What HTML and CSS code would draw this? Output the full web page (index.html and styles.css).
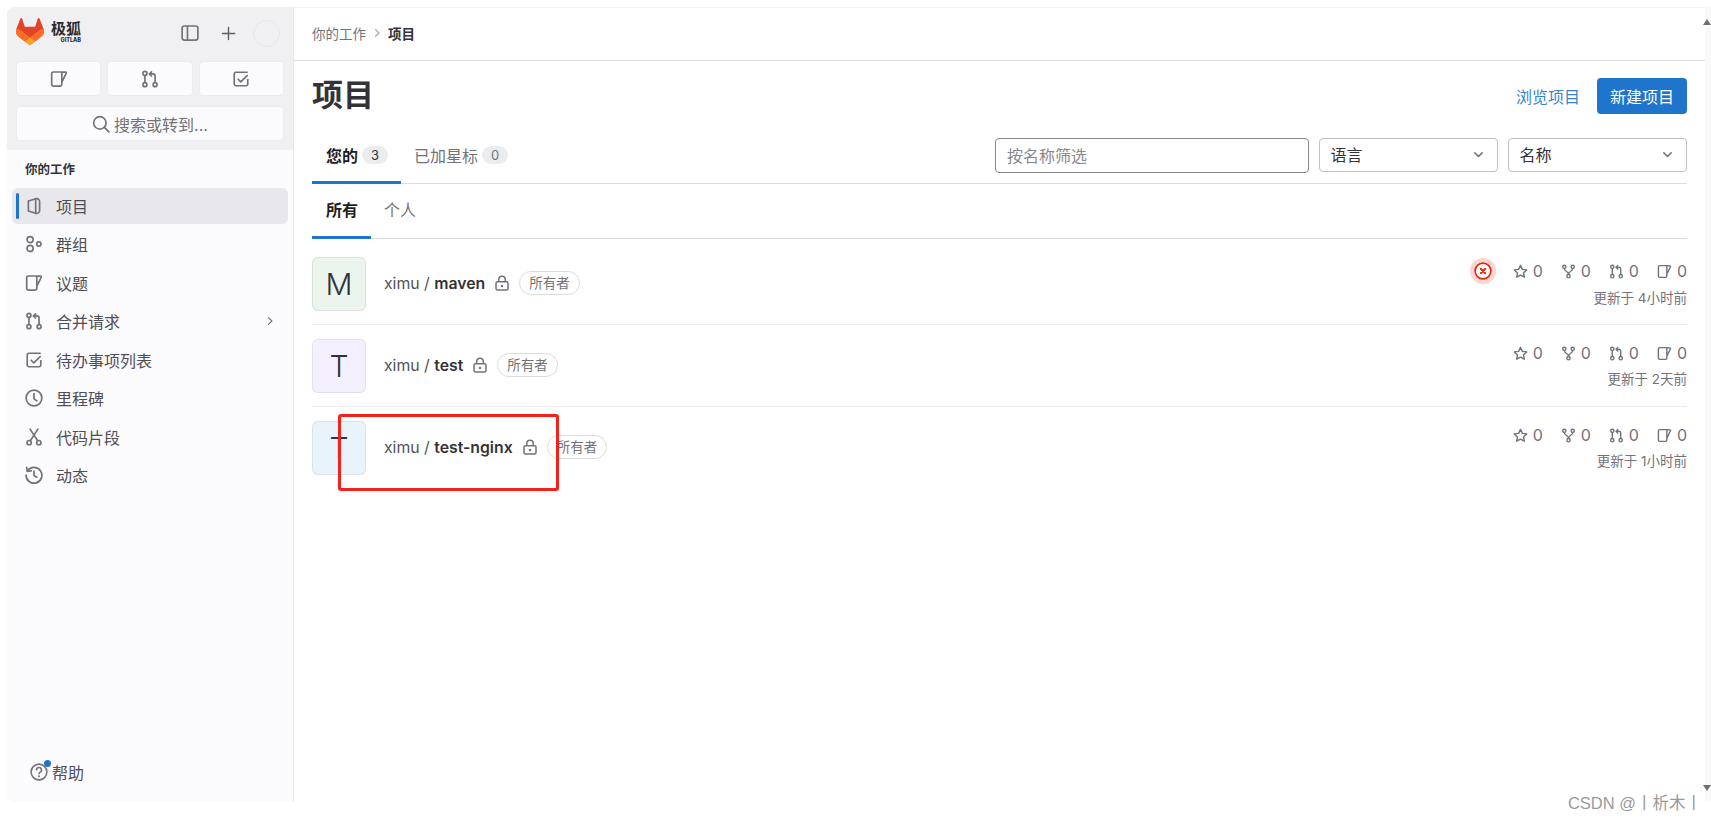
FILE: index.html
```html
<!DOCTYPE html>
<html lang="zh">
<head>
  <meta charset="UTF-8">
  <title>项目</title>
  <link rel="stylesheet" href="styles.css">
</head>
<body>
  <svg class="sprite" width="0" height="0">
    <symbol id="i-issue" viewBox="0 0 16 16"><path d="M3 1.750h7.500l3.500.200c.4 0 .6.400.450.750L10.500 11v1.750a1.500 1.500 0 0 1-1.500 1.500H3a1.500 1.500 0 0 1-1.500-1.500v-9.500A1.500 1.500 0 0 1 3 1.750zM10.500 1.750V11" fill="none" stroke="currentColor" stroke-width="1.500" stroke-linejoin="round"/></symbol>
    <symbol id="i-mr" viewBox="0 0 16 16"><g fill="none" stroke="currentColor" stroke-width="1.500"><circle cx="3.500" cy="3" r="1.750"/><circle cx="3.500" cy="13" r="1.750"/><circle cx="12.500" cy="13" r="1.750"/><path d="M3.500 4.750v6.500M12.500 11.250V5.500a2 2 0 0 0-2-2H8"/><path d="M9.800 1.200 7.500 3.500l2.300 2.300"/></g></symbol>
    <symbol id="i-todo" viewBox="0 0 16 16"><g fill="none" stroke="currentColor" stroke-width="1.500" stroke-linejoin="round"><path d="M14 8v4.500a1.500 1.500 0 0 1-1.500 1.500h-9A1.500 1.500 0 0 1 2 12.500v-9A1.500 1.500 0 0 1 3.500 2H14"/><path d="m5.500 8.200 2.300 2.300 5.700-5.500" stroke-linecap="round"/></g></symbol>
    <symbol id="i-project" viewBox="0 0 16 16"><g fill="none" stroke="currentColor" stroke-width="1.500" stroke-linejoin="round"><path d="M3 3.500 9.500 1.500h1a2.500 2.500 0 0 1 2.500 2.500v8a2.500 2.500 0 0 1-2.500 2.500h-1L3 12.500z"/><path d="M9.500 1.500v13"/></g></symbol>
    <symbol id="i-group" viewBox="0 0 16 16"><g fill="none" stroke="currentColor" stroke-width="1.500"><circle cx="4.500" cy="4.100" r="2.700"/><circle cx="4.500" cy="11.900" r="2.700"/><circle cx="12.300" cy="8" r="1.900"/></g></symbol>
    <symbol id="i-clock" viewBox="0 0 16 16"><g fill="none" stroke="currentColor" stroke-width="1.500" stroke-linecap="round"><circle cx="8" cy="8" r="7"/><path d="M8 4v4.500l2.500 2"/></g></symbol>
    <symbol id="i-snippet" viewBox="0 0 16 16"><g fill="none" stroke="currentColor" stroke-width="1.500" stroke-linecap="round"><circle cx="3.700" cy="13" r="1.900"/><circle cx="12.300" cy="13" r="1.900"/><path d="M11.300 11.400 4.500 1M4.700 11.400 11.500 1"/></g></symbol>
    <symbol id="i-history" viewBox="0 0 16 16"><g fill="none" stroke="currentColor" stroke-width="1.500" stroke-linecap="round" stroke-linejoin="round"><path d="M2.300 4.200A7 7 0 1 1 1 8"/><path d="M1.500 1.200 2 4.700l3.500-.4M8 4.500v4l2.500 1.500"/></g></symbol>
    <symbol id="i-star" viewBox="0 0 16 16"><path d="m8 1.500 2 4.200 4.600.6-3.400 3.200.9 4.600L8 11.900l-4.100 2.200.9-4.600L1.400 6.300 6 5.700z" fill="none" stroke="currentColor" stroke-width="1.500" stroke-linejoin="round"/></symbol>
    <symbol id="i-fork" viewBox="0 0 16 16"><g fill="none" stroke="currentColor" stroke-width="1.500"><circle cx="3.500" cy="3" r="1.750"/><circle cx="12.500" cy="3" r="1.750"/><circle cx="8" cy="13" r="1.750"/><path d="M3.500 4.750c0 3.500 4.500 2.500 4.500 6.500M12.500 4.750c0 3.500-4.500 2.500-4.500 6.500"/></g></symbol>
    <symbol id="i-lock" viewBox="0 0 16 16"><g fill="none" stroke="currentColor" stroke-width="1.500"><rect x="2" y="6.250" width="12" height="8.250" rx="1.500"/><path d="M4.750 6.250V4a3.250 3.250 0 0 1 6.500 0v2.250"/></g><circle cx="8" cy="10.400" r="1.250" fill="currentColor"/></symbol>
    <symbol id="i-chevron" viewBox="0 0 16 16"><path d="m6 3.500 4.500 4.500L6 12.500" fill="none" stroke="currentColor" stroke-width="1.500" stroke-linecap="round" stroke-linejoin="round"/></symbol>
    <symbol id="i-down" viewBox="0 0 16 16"><path d="M3.500 6 8 10.500 12.500 6" fill="none" stroke="currentColor" stroke-width="1.800" stroke-linecap="round" stroke-linejoin="round"/></symbol>
  </svg>

  <div class="shell">
    <aside class="sidebar">
      <div class="side-top">
        <div class="brand-row">
          <svg class="tanuki" viewBox="0 0 25 24">
            <path d="m24.507 9.500-.034-.090L21.082.562a.896.896 0 0 0-1.694.091l-2.290 7.010H7.825L5.535.653a.898.898 0 0 0-1.694-.090L.451 9.411.416 9.500a6.297 6.297 0 0 0 2.090 7.278l.012.010.030.022 5.160 3.867 2.560 1.935 1.554 1.176a1.051 1.051 0 0 0 1.268 0l1.555-1.176 2.560-1.935 5.197-3.890.014-.010A6.297 6.297 0 0 0 24.507 9.500Z" fill="#e24329"/>
            <path d="m24.507 9.500-.034-.090a11.440 11.440 0 0 0-4.560 2.051l-7.447 5.632 4.742 3.584 5.197-3.890.014-.010A6.297 6.297 0 0 0 24.507 9.500Z" fill="#fc6d26"/>
            <path d="m7.707 20.677 2.560 1.935 1.555 1.176a1.051 1.051 0 0 0 1.268 0l1.555-1.176 2.560-1.935-4.743-3.584-4.755 3.584Z" fill="#fca326"/>
            <path d="M5.010 11.461a11.430 11.430 0 0 0-4.560-2.050L.416 9.500a6.297 6.297 0 0 0 2.090 7.278l.012.010.030.022 5.160 3.867 4.745-3.584-7.444-5.632Z" fill="#fc6d26"/>
          </svg>
          <div class="brand-text">
            <span class="brand-name">极狐</span>
            <span class="brand-sub">GITLAB</span>
          </div>
          <svg class="top-icon panel-icon" viewBox="0 0 16 16"><g fill="none" stroke="currentColor" stroke-width="1.500"><rect x="1" y="1.750" width="14" height="12.500" rx="2"/><path d="M5.750 1.750v12.500"/></g></svg>
          <svg class="top-icon plus-icon" viewBox="0 0 16 16"><path d="M8 1.500v13M1.500 8h13" stroke="currentColor" stroke-width="1.500" stroke-linecap="round"/></svg>
          <span class="avatar-blank"></span>
        </div>
        <div class="quick-row">
          <button class="quick-btn"><svg class="icon"><use href="#i-issue"/></svg></button>
          <button class="quick-btn"><svg class="icon"><use href="#i-mr"/></svg></button>
          <button class="quick-btn"><svg class="icon"><use href="#i-todo"/></svg></button>
        </div>
        <button class="search-btn">
          <svg class="icon" viewBox="0 0 16 16"><g fill="none" stroke="currentColor" stroke-width="1.500" stroke-linecap="round"><circle cx="7" cy="7" r="5.500"/><path d="m11 11 4 4"/></g></svg>
          搜索或转到...
        </button>
      </div>

      <div class="nav-label">你的工作</div>
      <nav class="nav">
        <a class="nav-item active"><svg class="icon"><use href="#i-project"/></svg>项目</a>
        <a class="nav-item"><svg class="icon"><use href="#i-group"/></svg>群组</a>
        <a class="nav-item"><svg class="icon"><use href="#i-issue"/></svg>议题</a>
        <a class="nav-item"><svg class="icon"><use href="#i-mr"/></svg>合并请求<svg class="nav-chevron"><use href="#i-chevron"/></svg></a>
        <a class="nav-item"><svg class="icon"><use href="#i-todo"/></svg>待办事项列表</a>
        <a class="nav-item"><svg class="icon"><use href="#i-clock"/></svg>里程碑</a>
        <a class="nav-item"><svg class="icon"><use href="#i-snippet"/></svg>代码片段</a>
        <a class="nav-item"><svg class="icon"><use href="#i-history"/></svg>动态</a>
      </nav>

      <div class="help">
        <span class="help-icon">
          <svg class="icon" viewBox="0 0 16 16"><g fill="none" stroke="currentColor" stroke-width="1.400" stroke-linecap="round"><circle cx="8" cy="8" r="7"/><path d="M5.800 6.200a2.200 2.200 0 1 1 3.300 1.900c-.7.400-1.100.8-1.100 1.500"/></g><circle cx="8" cy="11.800" r=".9" fill="currentColor"/></svg>
          <span class="help-dot"></span>
        </span>
        帮助
      </div>
    </aside>

    <main class="main">
      <div class="breadcrumb">
        <span>你的工作</span>
        <svg class="crumb-sep"><use href="#i-chevron"/></svg>
        <b>项目</b>
      </div>

      <div class="content">
        <div class="title-row">
          <h1>项目</h1>
          <a class="link">浏览项目</a>
          <button class="btn-primary">新建项目</button>
        </div>

        <div class="tabs-row">
          <div class="tab active">您的<span class="count">3</span></div>
          <div class="tab">已加星标<span class="count muted">0</span></div>
          <div class="filters">
            <div class="filter-input">按名称筛选</div>
            <div class="select">语言<svg class="select-arrow"><use href="#i-down"/></svg></div>
            <div class="select">名称<svg class="select-arrow"><use href="#i-down"/></svg></div>
          </div>
        </div>

        <div class="subtabs-row">
          <div class="subtab active">所有</div>
          <div class="subtab">个人</div>
        </div>

        <div class="project-row first">
          <div class="proj-avatar green">M</div>
          <div class="proj-name">ximu / <b>maven</b><svg class="lock"><use href="#i-lock"/></svg><span class="role">所有者</span></div>
          <div class="proj-meta">
            <div class="stats">
              <span class="status-failed"><svg viewBox="0 0 16 16"><circle cx="8" cy="8" r="7" fill="#fff" stroke="#dd2b0e" stroke-width="1.500"/><path d="m6 6 4 4m0-4-4 4" stroke="#dd2b0e" stroke-width="1.800" stroke-linecap="round"/></svg></span>
              <span class="stat"><svg class="stat-icon"><use href="#i-star"/></svg>0</span>
              <span class="stat"><svg class="stat-icon"><use href="#i-fork"/></svg>0</span>
              <span class="stat"><svg class="stat-icon"><use href="#i-mr"/></svg>0</span>
              <span class="stat"><svg class="stat-icon"><use href="#i-issue"/></svg>0</span>
            </div>
            <div class="updated">更新于 4小时前</div>
          </div>
        </div>

        <div class="project-row">
          <div class="proj-avatar violet">T</div>
          <div class="proj-name">ximu / <b>test</b><svg class="lock"><use href="#i-lock"/></svg><span class="role">所有者</span></div>
          <div class="proj-meta">
            <div class="stats">
              <span class="stat"><svg class="stat-icon"><use href="#i-star"/></svg>0</span>
              <span class="stat"><svg class="stat-icon"><use href="#i-fork"/></svg>0</span>
              <span class="stat"><svg class="stat-icon"><use href="#i-mr"/></svg>0</span>
              <span class="stat"><svg class="stat-icon"><use href="#i-issue"/></svg>0</span>
            </div>
            <div class="updated">更新于 2天前</div>
          </div>
        </div>

        <div class="project-row last">
          <div class="proj-avatar blue">T</div>
          <div class="proj-name">ximu / <b>test-nginx</b><svg class="lock"><use href="#i-lock"/></svg><span class="role">所有者</span></div>
          <div class="proj-meta">
            <div class="stats">
              <span class="stat"><svg class="stat-icon"><use href="#i-star"/></svg>0</span>
              <span class="stat"><svg class="stat-icon"><use href="#i-fork"/></svg>0</span>
              <span class="stat"><svg class="stat-icon"><use href="#i-mr"/></svg>0</span>
              <span class="stat"><svg class="stat-icon"><use href="#i-issue"/></svg>0</span>
            </div>
            <div class="updated">更新于 1小时前</div>
          </div>
        </div>
      </div>
    </main>

    <div class="scroll-strip"></div>
  </div>

  <!-- annotation drawn on top of the screenshot -->
  <div class="red-box"></div>
  <span class="scroll-arrow up"></span>
  <span class="scroll-arrow down"></span>
  <div class="watermark">CSDN @丨析木丨</div>
</body>
</html>
```

FILE: styles.css
```css
:root {
  --text: #333238;
  --muted: #737278;
  --icon: #737278;
  --line: #dcdcde;
  --line-soft: #ececef;
  --blue: #1f75cb;
  --side: #fbfafd;
  --side-top: #f0f0f3;
}

* {
  box-sizing: border-box;
}

html, body {
  margin: 0;
  height: 822px;
  overflow: hidden;
}

body {
  position: relative;
  background: #fff;
  color: var(--text);
  font-family: Inter, "Noto Sans CJK SC", sans-serif;
  font-size: 16px;
}

.sprite {
  position: absolute;
}

.shell {
  display: flex;
  height: 802px;
  padding: 7px 0 0 7px;
}

.icon {
  width: 18px;
  height: 18px;
  color: var(--icon);
  flex: none;
}

/* sidebar */
.sidebar {
  width: 287px;
  flex: none;
  display: flex;
  flex-direction: column;
  background: var(--side);
  border-right: 1px solid #e8e8ea;
  border-radius: 8px 0 0 8px;
  overflow: hidden;
}

.side-top {
  height: 143px;
  padding: 10px 9px 0;
  background: var(--side-top);
}

.brand-row {
  display: flex;
  align-items: center;
  height: 28px;
  margin-bottom: 16px;
  padding-top: 4px;
}

.tanuki {
  width: 28px;
  height: 27px;
  flex: none;
  margin: -3px 0 0 0;
}

.brand-text {
  display: flex;
  flex-direction: column;
  align-items: flex-end;
  margin: -3px 0 0 7px;
  line-height: 1;
  color: #2b2a30;
}

.brand-name {
  font-size: 15px;
  font-weight: 700;
  line-height: 17px;
}

.brand-sub {
  font-size: 5.500px;
  font-weight: 800;
  line-height: 6px;
}

.top-icon {
  width: 18px;
  height: 18px;
  color: var(--icon);
  flex: none;
}

.panel-icon {
  margin-left: 100px;
}

.plus-icon {
  width: 15px;
  height: 15px;
  margin-left: 22px;
  color: #5e5d63;
}

.avatar-blank {
  width: 27px;
  height: 27px;
  margin-left: 17px;
  border-radius: 50%;
  border: 1px solid #e6e6e8;
  background: var(--side-top);
}

.quick-row {
  display: flex;
  gap: 6px;
  margin-bottom: 10px;
}

.quick-btn,
.search-btn {
  display: flex;
  align-items: center;
  justify-content: center;
  background: var(--side);
  border: 1px solid #ececef;
  border-radius: 4px;
  font: inherit;
  padding: 0;
}

.quick-btn {
  flex: 1;
  height: 35px;
}

.search-btn {
  width: 100%;
  height: 35px;
  gap: 4px;
  color: var(--muted);
}

.nav-label {
  padding: 12px 0 0 18px;
  height: 38px;
  font-size: 12.500px;
  font-weight: 700;
  line-height: 16px;
}

.nav {
  display: flex;
  flex-direction: column;
  gap: 2.450px;
  padding: 0 5px;
}

.nav-item {
  position: relative;
  display: flex;
  align-items: center;
  height: 36px;
  padding-left: 13px;
  border-radius: 6px;
  color: #4f4e55;
  font-size: 16px;
}

.nav-item .icon {
  margin-right: 13px;
}

.nav-item.active {
  background: #e8e8ec;
}

.nav-item.active::before {
  content: "";
  position: absolute;
  left: 4px;
  top: 5px;
  bottom: 5px;
  width: 3px;
  border-radius: 2px;
  background: var(--blue);
}

.nav-chevron {
  width: 12px;
  height: 12px;
  margin-left: auto;
  margin-right: 12px;
  color: var(--icon);
}

.help {
  display: flex;
  align-items: center;
  gap: 4px;
  margin-top: auto;
  padding: 0 0 18px 23px;
  color: #4f4e55;
  font-size: 16px;
}

.help-icon {
  position: relative;
  display: flex;
}

.help-dot {
  position: absolute;
  top: -3px;
  right: -3px;
  width: 7px;
  height: 7px;
  border-radius: 50%;
  background: var(--blue);
}

/* main column */
.main {
  flex: 1;
  min-width: 0;
  border-top: 1px solid #f3f3f4;
}

.breadcrumb {
  display: flex;
  align-items: center;
  height: 53px;
  padding: 0 0 2px 18px;
  border-bottom: 1px solid var(--line);
  font-size: 13.500px;
  color: var(--muted);
}

.breadcrumb b {
  color: var(--text);
}

.crumb-sep {
  width: 12px;
  height: 12px;
  margin: 0 5px;
  color: #a0a0a5;
}

.content {
  padding: 0 18px;
}

.title-row {
  display: flex;
  align-items: center;
  height: 69px;
}

h1 {
  margin: -7px auto 0 0;
  font-size: 31px;
  font-weight: 700;
}

.link {
  color: #3a83d0;
  margin-right: 17px;
}

.btn-primary {
  width: 90px;
  height: 36px;
  border: 0;
  border-radius: 4px;
  background: var(--blue);
  color: #fff;
  font: inherit;
}

.tabs-row {
  display: flex;
  height: 54px;
  border-bottom: 1px solid var(--line);
}

.tab {
  display: flex;
  align-items: center;
  gap: 4px;
  height: 54px;
  padding: 0 14px 5px 13px;
  color: var(--muted);
}

.tab.active {
  color: #1f1e24;
  font-weight: 700;
  border-bottom: 3px solid var(--blue);
  padding: 0 13px 2px 14px;
}

.count {
  min-width: 26px;
  height: 18px;
  padding: 0 8px;
  border-radius: 9px;
  background: #ececef;
  color: #333238;
  font-size: 13px;
  font-weight: 400;
  line-height: 18px;
  text-align: center;
}

.count.muted {
  color: var(--muted);
}

.filters {
  display: flex;
  gap: 9.500px;
  margin-left: auto;
  padding-top: 8px;
}

.filter-input,
.select {
  display: flex;
  align-items: center;
  height: 35px;
  padding-bottom: 2px;
  border-radius: 4px;
  background: #fff;
}

.filter-input {
  width: 314px;
  padding-left: 11px;
  border: 1px solid #89888d;
  color: #89888d;
}

.select {
  width: 179.500px;
  height: 34px;
  padding: 0 12px 2px 11px;
  border: 1px solid #bfbfc3;
}

.select-arrow {
  width: 13px;
  height: 13px;
  margin-left: auto;
  color: var(--icon);
}

.subtabs-row {
  display: flex;
  height: 55px;
  border-bottom: 1px solid var(--line);
}

.subtab {
  display: flex;
  align-items: center;
  height: 55px;
  padding: 0 14px 5px 13px;
  color: var(--muted);
}

.subtab.active {
  color: #1f1e24;
  font-weight: 700;
  border-bottom: 3px solid var(--blue);
  padding: 0 13px 2px 14px;
}

/* project rows */
.project-row {
  display: flex;
  height: 82px;
  padding-top: 14px;
  border-bottom: 1px solid var(--line-soft);
}

.project-row.first {
  height: 86px;
  padding-top: 18px;
}

.project-row.last {
  border-bottom: 0;
}

.proj-avatar {
  display: flex;
  align-items: center;
  justify-content: center;
  width: 54px;
  height: 54px;
  flex: none;
  border-radius: 6px;
  border: 1px solid rgba(31, 30, 36, 0.08);
  font-size: 30px;
  font-weight: 300;
  color: #333238;
}

.green {
  background: #ecf4ee;
}

.violet {
  background: #f4f0ff;
}

.blue {
  background: #e9f3fc;
}

.proj-name {
  display: flex;
  align-items: center;
  height: 26px;
  margin: 13px 0 0 18px;
  white-space: pre;
  color: #535158;
  font-size: 15.800px;
}

.proj-name b {
  color: var(--text);
  font-weight: 600;
}

.lock {
  width: 16px;
  height: 17px;
  margin: 0 9px 0 9px;
  color: var(--icon);
}

.role {
  height: 24px;
  padding: 0 9px;
  border: 1px solid var(--line);
  border-radius: 12px;
  color: var(--muted);
  font-size: 13.500px;
  line-height: 22px;
}

.proj-meta {
  margin-left: auto;
  padding-top: 1px;
  text-align: right;
}

.project-row.first .updated {
  margin-top: 5px;
}

.stats {
  display: flex;
  align-items: center;
  justify-content: flex-end;
  gap: 18px;
  height: 26px;
  color: var(--muted);
}

.stat {
  display: flex;
  align-items: center;
  gap: 5px;
}

.stat-icon {
  width: 15px;
  height: 15px;
  color: var(--icon);
}

.status-failed {
  display: flex;
  align-items: center;
  justify-content: center;
  width: 26px;
  height: 26px;
  margin-right: -1px;
  border-radius: 50%;
  background: #fcd6cf;
}

.status-failed svg {
  width: 18px;
  height: 18px;
}

.updated {
  margin-top: 4px;
  color: var(--muted);
  font-size: 13.500px;
  line-height: 18px;
}

/* things on top of the picture */
.scroll-strip {
  width: 6px;
  flex: none;
  background: #f9f9f9;
}

.red-box {
  position: absolute;
  left: 338px;
  top: 414px;
  width: 221px;
  height: 77px;
  border: 3px solid #f5221b;
  border-radius: 3px;
}

.scroll-arrow {
  position: absolute;
  right: 0;
  width: 0;
  height: 0;
  border-left: 4px solid transparent;
  border-right: 4px solid transparent;
}

.scroll-arrow.up {
  top: 19px;
  border-bottom: 6px solid #6f6f6f;
}

.scroll-arrow.down {
  top: 785px;
  border-top: 6px solid #6f6f6f;
}

.watermark {
  position: absolute;
  right: 9px;
  top: 792px;
  color: #9a9a9a;
  font-size: 16.500px;
  line-height: 22px;
  font-family: "Liberation Sans", "Noto Sans CJK SC", sans-serif;
}
```
